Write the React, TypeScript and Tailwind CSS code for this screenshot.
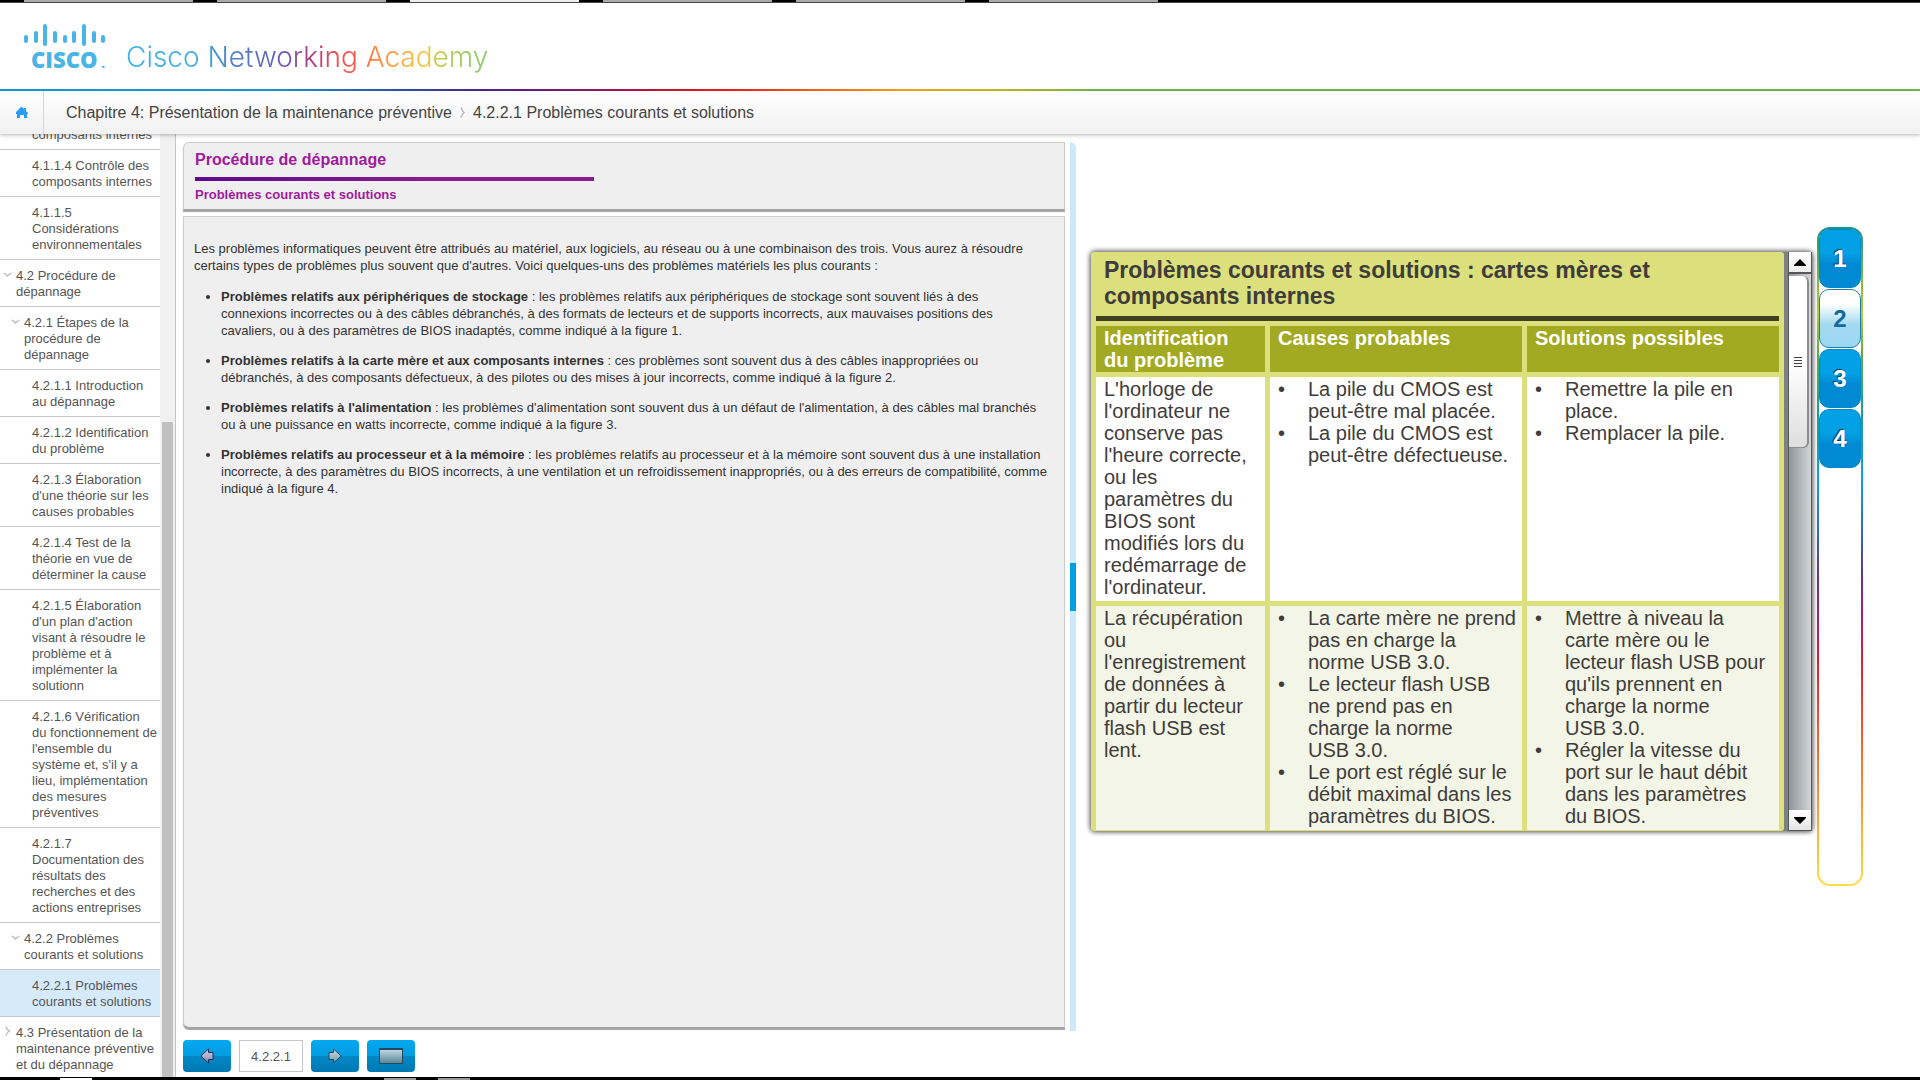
import React from 'react';

type NavItem = { level: 1 | 2 | 3; text: string; open?: boolean; closed?: boolean; active?: boolean };

const navItems: NavItem[] = [
  { level: 3, text: 'composants internes' },
  { level: 3, text: '4.1.1.4 Contrôle des composants internes' },
  { level: 3, text: '4.1.1.5 Considérations environnementales' },
  { level: 1, text: '4.2 Procédure de dépannage', open: true },
  { level: 2, text: '4.2.1 Étapes de la procédure de dépannage', open: true },
  { level: 3, text: '4.2.1.1 Introduction au dépannage' },
  { level: 3, text: '4.2.1.2 Identification du problème' },
  { level: 3, text: "4.2.1.3 Élaboration d'une théorie sur les causes probables" },
  { level: 3, text: '4.2.1.4 Test de la théorie en vue de déterminer la cause' },
  { level: 3, text: "4.2.1.5 Élaboration d'un plan d'action visant à résoudre le problème et à implémenter la solutionn" },
  { level: 3, text: "4.2.1.6 Vérification du\u00a0fonctionnement\u00a0de l'ensemble du système et, s'il y a lieu, implémentation des mesures préventives" },
  { level: 3, text: '4.2.1.7 Documentation des résultats des recherches et des actions entreprises' },
  { level: 2, text: '4.2.2 Problèmes courants et solutions', open: true },
  { level: 3, text: '4.2.2.1 Problèmes courants et solutions', active: true },
  { level: 1, text: '4.3 Présentation de la maintenance préventive et du dépannage', closed: true },
];

const indent = { 1: 'pl-4', 2: 'pl-6', 3: 'pl-8' };

function WindowEdgeTop() {
  return (
    <div className="flex h-[3px] shrink-0 gap-6 border-b border-[#444] bg-black pl-6">
      {[0, 1, 2, 3, 4, 5].map((i) => (
        <span key={i} className={i === 2 ? 'h-[2px] w-[169px] bg-[#eee]' : 'h-[2px] w-[169px] bg-[#aaa]'} />
      ))}
    </div>
  );
}

function WindowEdgeBottom() {
  return (
    <div className="flex h-[3px] shrink-0 items-end bg-black pl-[60px]">
      <span className="h-[2px] w-8 bg-white" />
      <span className="ml-[292px] h-[2px] w-8 bg-[#999]" />
      <span className="ml-[22px] h-[2px] w-8 bg-[#999]" />
    </div>
  );
}

function Logo() {
  const bars: [number, number, number][] = [
    [2, 11, 19], [12, 7, 19], [21, 0, 22], [31, 7, 19], [41, 11, 19], [50, 7, 19], [60, 0, 22], [70, 7, 19], [79, 11, 19],
  ];
  return (
    <div className="flex w-[82px] flex-col text-[#49b4e6]">
      <svg width="82" height="22" viewBox="0 0 82 22" aria-hidden="true">
        {bars.map(([x, top, bottom]) => (
          <rect key={x} x={x - 2} y={top} width="4" height={bottom - top} rx="2" fill="currentColor" />
        ))}
      </svg>
      <span className="mt-[3px] flex items-baseline pl-[7px] font-['Open_Sans'] text-[22px] leading-5 font-extrabold">
        CISCO<span className="pl-1 text-xs leading-5">.</span>
      </span>
    </div>
  );
}

function Header() {
  return (
    <header className="shrink-0">
      <div className="flex h-[86px] items-start bg-white pt-[21px] pl-6">
        <Logo />
        <div className="ml-5 bg-[linear-gradient(90deg,#3fb2e3_0%,#44addf_20%,#4a86cc_28%,#5a6bbd_38%,#7a51a8_46%,#b43a78_52%,#f04a55_58%,#ff5a48_64%,#ff8442_69%,#fba63e_76%,#f4c53f_82%,#bccb55_88%,#84ca6a_100%)] bg-clip-text pt-[15px] font-['Inter'] text-[28px] leading-9 font-light text-transparent">
          Cisco Networking Academy
        </div>
      </div>
      <div className="h-[2px] bg-[linear-gradient(90deg,#15a0e0_0%,#1b9cdd_14%,#2a66bf_19%,#4b2a94_25%,#8a1a70_30%,#c8153a_34%,#fb1e18_38%,#ff6e15_43%,#ffa817_47%,#c9bd25_52%,#78bf45_57%,#78bf45_100%)]" />
    </header>
  );
}

function Breadcrumb() {
  return (
    <nav aria-label="Fil d'Ariane" className="relative z-10 flex h-[43px] shrink-0 items-stretch bg-linear-to-b from-white to-[#f1f1f1] text-base text-[#444] shadow-[0_1px_4px_rgba(0,0,0,0.3)]">
      <a href="#accueil" aria-label="Accueil" className="flex w-11 items-center justify-center border-r border-[#d4d4d4]">
        <svg width="12" height="11" viewBox="0 0 12 11" aria-hidden="true">
          <path d="M5 0h1l2 2V1h2v3l2 2v1h-1v4H8V8H4v3H1V7H0V5z" fill="#2b9cff" />
        </svg>
      </a>
      <div className="flex items-center pl-[22px]">
        <a href="#chapitre-4">Chapitre 4: Présentation de la maintenance préventive</a>
        <svg className="mx-2" width="5" height="11" viewBox="0 0 5 11" aria-hidden="true">
          <path d="M1 .5Q2 4 4 5.500Q2 7 1 10.500" fill="none" stroke="#bbb" strokeWidth="1.500" />
        </svg>
        <a href="#4.2.2.1">4.2.2.1 Problèmes courants et solutions</a>
      </div>
    </nav>
  );
}

function Sidebar() {
  return (
    <aside className="flex w-[176px] shrink-0 overflow-hidden border-r border-[#c4c4c4]">
      <ul className="-mt-[15px] w-40 shrink-0 text-[13px] leading-4 text-[#555]">
        {navItems.map((item) => (
          <li key={item.text} className="relative border-b border-[#c8c8c8]">
            {item.open && (
              <svg className={item.level === 1 ? 'absolute top-[12px] left-[3px]' : 'absolute top-[12px] left-[11px]'} width="9" height="6" viewBox="0 0 9 6" aria-hidden="true">
                <path d="M.5 1Q3 2 4.500 4Q6 2 8.500 1" fill="none" stroke="#bbb" strokeWidth="1.300" />
              </svg>
            )}
            {item.closed && (
              <svg className="absolute top-[9px] left-[5px]" width="6" height="10" viewBox="0 0 6 10" aria-hidden="true">
                <path d="M1 .5Q2 4 4.500 5Q2 6 1 9.500" fill="none" stroke="#bbb" strokeWidth="1.300" />
              </svg>
            )}
            <a href="#section" className={`block pt-2 pr-1 pb-1.5 ${indent[item.level]} ${item.active ? 'bg-[#d5eafb]' : ''}`}>
              {item.text}
            </a>
          </li>
        ))}
      </ul>
      <div className="flex flex-1 flex-col justify-end bg-[#f1f1f1] pr-[2px] pl-[2px]">
        <div className="h-[69.5%] bg-[#c1c1c1]" />
      </div>
    </aside>
  );
}

const nb = '\u00a0';

const problems = [
  {
    title: 'Problèmes relatifs aux périphériques de stockage',
    text: `les problèmes relatifs aux périphériques de stockage sont souvent liés à des connexions${nb}incorrectes ou à des câbles débranchés, à des formats de lecteurs et de supports incorrects, aux mauvaises positions des cavaliers,${nb}ou à des paramètres de BIOS inadaptés, comme indiqué à la figure 1.`,
  },
  {
    title: 'Problèmes relatifs à la carte mère et aux composants internes',
    text: `ces problèmes sont souvent dus à des câbles inappropriées ou débranchés,${nb}à des composants défectueux, à des pilotes ou des mises à jour incorrects, comme indiqué à la figure 2.`,
  },
  {
    title: "Problèmes relatifs à l'alimentation",
    text: "les problèmes d'alimentation sont souvent dus à un défaut de l'alimentation, à des câbles mal branchés ou à une puissance en watts incorrecte, comme indiqué à la figure 3.",
  },
  {
    title: 'Problèmes relatifs au processeur et à la mémoire',
    text: 'les problèmes relatifs au processeur et à la mémoire sont souvent dus à une installation incorrecte, à des paramètres du BIOS incorrects, à une ventilation et un refroidissement inappropriés, ou à des erreurs de compatibilité, comme indiqué à la figure 4.',
  },
];

const blueButton =
  'flex h-8 w-12 items-center justify-center rounded-[4px] bg-[linear-gradient(180deg,#03a9f0_0%,#029be0_50%,#0288c6_50%,#0079b2_100%)]';

function Toolbar() {
  return (
    <div className="flex items-center gap-2 pt-3">
      <button type="button" aria-label="Page précédente" className={blueButton}>
        <svg width="14" height="16" viewBox="0 0 14 16" aria-hidden="true">
          <defs>
            <linearGradient id="prev" x1="0" y1="0" x2="0" y2="1">
              <stop offset="0" stopColor="#d3d6ea" />
              <stop offset="1" stopColor="#8287b0" />
            </linearGradient>
          </defs>
          <path d="M8.500 1v3.500h4.500v7H8.500V15L.8 8z" fill="url(#prev)" stroke="#2b2f55" />
        </svg>
      </button>
      <input aria-label="Page" defaultValue="4.2.2.1" className="h-8 w-16 border border-[#c6c6c6] bg-white text-center text-[13px] text-[#555]" />
      <button type="button" aria-label="Page suivante" className={blueButton}>
        <svg width="14" height="16" viewBox="0 0 14 16" aria-hidden="true">
          <defs>
            <linearGradient id="next" x1="0" y1="0" x2="0" y2="1">
              <stop offset="0" stopColor="#d0e0e4" />
              <stop offset="1" stopColor="#6f97a8" />
            </linearGradient>
          </defs>
          <path d="M5.500 1v3.500H1v7h4.500V15l7.700-7z" fill="url(#next)" stroke="#1f4a5c" />
        </svg>
      </button>
      <button type="button" aria-label="Plein écran" className={blueButton}>
        <span className="h-4 w-6 border border-t-2 border-[#1d4a60] bg-linear-to-b from-[#bfd5dc] to-[#5d8599]" />
      </button>
    </div>
  );
}

function TextColumn() {
  return (
    <section className="flex min-w-0 flex-[887] flex-col pt-2 pb-[5px]">
      <div className="mr-[5px] flex min-h-0 flex-1 flex-col">
        <div className="rounded-tl-md border border-[#cdcdcd] border-b-[#a3a3a3] bg-[#efefef] px-[11px] pb-[6px] shadow-[0_2px_1px_#a3a3a3]">
          <h1 className="pt-[7px] text-base leading-5 font-bold text-[#a01aa0]">Procédure de dépannage</h1>
          <div className="mt-[7px] h-1 w-[399px] bg-linear-to-r from-[#5f0590] to-[#8c1a8e] to-60%" />
          <h2 className="mt-1 pt-[2px] text-[13px] leading-4 font-bold text-[#a01aa0]">Problèmes courants et solutions</h2>
        </div>
        <div className="mt-[6px] flex-1 rounded-bl-md border border-[#cdcdcd] border-b-[#a3a3a3] bg-[#efefef] px-[10px] pt-[23px] text-[13px] leading-[17px] text-[#333] shadow-[0_2px_1px_#a3a3a3]">
          <p className="pr-4">
            Les problèmes informatiques peuvent être attribués au matériel, aux logiciels, au réseau ou à une combinaison des trois. Vous aurez à résoudre certains
            types de problèmes plus souvent que d'autres. Voici quelques-uns des problèmes matériels les plus courants :
          </p>
          <ul className="mt-[14px] flex list-disc flex-col gap-[13px] pl-[27px]">
            {problems.map((p) => (
              <li key={p.title}>
                <strong>{p.title}</strong> : {p.text}
              </li>
            ))}
          </ul>
        </div>
      </div>
      <Toolbar />
    </section>
  );
}

const rows = [
  {
    problem: "L'horloge de l'ordinateur ne conserve pas l'heure correcte, ou les paramètres du BIOS sont modifiés lors du redémarrage de l'ordinateur.",
    causes: ['La pile du CMOS est peut-être mal placée.', 'La pile du CMOS est peut-être défectueuse.'],
    fixes: ['Remettre la pile en place.', 'Remplacer la pile.'],
    shade: 'bg-white',
  },
  {
    problem: "La récupération ou l'enregistrement de données à partir du lecteur flash USB est lent.",
    causes: [
      `La carte mère ne prend pas en charge la norme${nb}USB${nb}3.0.`,
      `Le lecteur flash USB ne prend pas en charge la norme USB${nb}3.0.`,
      'Le port est réglé sur le débit maximal dans les paramètres du BIOS.',
    ],
    fixes: [
      `Mettre à niveau la carte mère ou le lecteur flash USB pour qu'ils prennent en charge la norme USB${nb}3.0.`,
      `Régler la vitesse du port sur le haut débit dans les paramètres du${nb}BIOS.`,
    ],
    shade: 'bg-[#f3f5e6]',
  },
];

function Bullets({ items }: { items: string[] }) {
  return (
    <ul>
      {items.map((t) => (
        <li key={t} className="flex">
          <span className="w-[30px] shrink-0">•</span>
          <span>{t}</span>
        </li>
      ))}
    </ul>
  );
}

function Figure() {
  return (
    <div className="flex min-w-0 flex-1 rounded-[4px] bg-[#808080] shadow-[0_0_5px_1px_rgba(0,0,0,0.7)]">
      <div className="min-w-0 flex-1 overflow-hidden rounded-[3px] bg-[#dbe07c] text-xl leading-[22px] text-[#403c3b]">
        <h2 className="px-[13px] pt-[5px] text-[23px] leading-[26px] font-bold">
          Problèmes courants et solutions : cartes mères et composants internes
        </h2>
        <div className="mx-[5px] mt-[7px] h-[5px] bg-[#42411e]" />
        <table className="-mb-1 w-full table-fixed border-separate border-spacing-[5px] text-left">
          <thead>
            <tr className="bg-[#a2a922] align-top text-white">
              <th className="w-[169px] py-px pr-2 pl-2 font-bold">Identification du{nb}problème</th>
              <th className="py-px pl-2 font-bold">Causes probables</th>
              <th className="py-px pl-2 font-bold">Solutions possibles</th>
            </tr>
          </thead>
          <tbody>
            {rows.map((r) => (
              <tr key={r.problem} className={`align-top ${r.shade}`}>
                <td className="pt-px pr-2 pb-[3px] pl-2">{r.problem}</td>
                <td className="pt-px pr-1 pb-[3px] pl-2">
                  <Bullets items={r.causes} />
                </td>
                <td className="pt-px pr-2 pb-[3px] pl-2">
                  <Bullets items={r.fixes} />
                </td>
              </tr>
            ))}
          </tbody>
        </table>
      </div>
      <div className="ml-1 flex w-6 shrink-0 flex-col border-x border-[#55585c] bg-linear-to-r from-[#8f9699] to-[#d4d6d8]">
        <button type="button" aria-label="Défiler vers le haut" className="flex h-[22px] items-center justify-center border-b-2 border-[#555] bg-linear-to-b from-white to-[#eee]">
          <svg width="12" height="7" viewBox="0 0 12 7" aria-hidden="true">
            <path d="M6 0 12 6v1H0V6z" fill="#000" />
          </svg>
        </button>
        <div className="mt-[2px] mr-[2px] flex h-[172px] flex-col items-center justify-center gap-[2px] rounded-r-md border-r-2 border-b border-[#8b8d90] bg-linear-to-b from-white via-white to-[#dedede]">
          {[0, 1, 2, 3].map((i) => (
            <span key={i} className="h-px w-2 bg-[#444]" />
          ))}
        </div>
        <div className="flex-1" />
        <button type="button" aria-label="Défiler vers le bas" className="flex h-[21px] items-center justify-center border-b border-[#555] bg-linear-to-b from-white to-[#e4e4e4]">
          <svg width="12" height="7" viewBox="0 0 12 7" aria-hidden="true">
            <path d="M6 7 12 1V0H0v1z" fill="#000" />
          </svg>
        </button>
      </div>
    </div>
  );
}

function FigureTabs() {
  return (
    <div className="ml-[5px] h-[659px] w-[46px] shrink-0 rounded-[13px] bg-[linear-gradient(180deg,#16938a_0%,#7dba45_8%,#b9cb2f_13%,#5fb043_19%,#1a9f90_28%,#13a0dc_38%,#2d6fc0_46%,#5a3a97_52%,#a02078_58%,#dc1f35_66%,#f7612a_78%,#fb9b38_88%,#ffdd48_100%)] p-[2px]">
      <div className="flex h-full flex-col gap-px rounded-[11px] bg-white">
        {['1', '2', '3', '4'].map((n) => (
          <button
            key={n}
            type="button"
            className={
              n === '2'
                ? 'h-[59px] rounded-[10px] border border-[#1a7fb0] bg-[linear-gradient(180deg,#fff_25%,#a4daf2_60%,#9bd6f0_100%)] text-2xl font-bold text-[#136a9c]'
                : 'h-[59px] rounded-[10px] border border-[#0287c8] bg-[linear-gradient(180deg,#02a1e6_40%,#0289d3_60%)] text-2xl font-bold text-white [text-shadow:-1px_-1px_1px_#0a3d60]'
            }
          >
            {n}
          </button>
        ))}
      </div>
    </div>
  );
}

export default function App() {
  return (
    <div className="flex h-screen flex-col overflow-hidden bg-white font-['Liberation_Sans',sans-serif]">
      <WindowEdgeTop />
      <Header />
      <Breadcrumb />
      <main className="flex min-h-0 flex-1">
        <Sidebar />
        <div className="flex min-w-0 flex-1 pl-[7px]">
          <TextColumn />
          <div className="mt-2 mb-[46px] flex w-[6px] shrink-0 flex-col justify-center rounded-tr-md bg-[#cbe9f8]">
            <div className="h-12 bg-[#00a1e4]" />
          </div>
          <section className="min-w-0 flex-[844]">
            <div className="flex items-start pt-[93px] pr-[57px] pl-[15px]">
              <div className="mt-[25px] flex min-w-0 flex-1">
                <Figure />
              </div>
              <FigureTabs />
            </div>
          </section>
        </div>
      </main>
      <WindowEdgeBottom />
    </div>
  );
}
